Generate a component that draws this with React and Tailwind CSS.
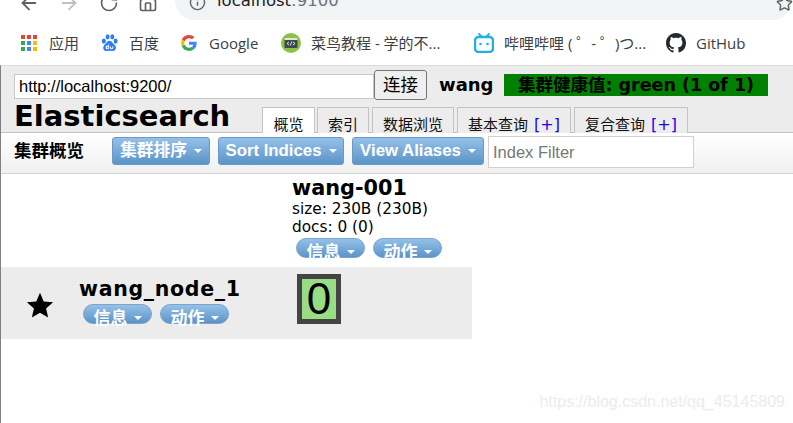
import React from 'react';
import { ArrowLeft, ArrowRight, RotateCw, Home, Info, Star } from 'lucide-react';

const sans = "font-['Liberation_Sans','Noto_Sans_CJK_SC',sans-serif]";
const verdana = "font-['DejaVu_Sans','Noto_Sans_CJK_SC',sans-serif]";

const Caret = ({ className = 'border-t-white' }) => (
    <span className={`inline-block w-0 h-0 border-x-[4px] border-x-transparent border-t-[4px] ${className}`} />
);

const BarButton = ({ label, width, ml }) => (
    <div
        className={`${width} ${ml} h-[28px] mt-[1px] flex items-center justify-center gap-[7px] rounded-[3px] border border-[#6d97c4] bg-gradient-to-b from-[#95c1e8] to-[#5a94c8] text-white font-bold text-[16.800px] shrink-0`}
    >
        <span>{label}</span>
        <Caret />
    </div>
);

const PillButton = ({ label, ml }) => (
    <div className={`${ml} w-[69px] h-[20px] flex justify-center gap-[6px] rounded-full border border-[#7ba3cd] bg-gradient-to-b from-[#95c1e8] to-[#5a94c8] text-white font-bold text-[17px] shrink-0`}>
        <span className="mt-[4px] leading-[20px] h-[20px] whitespace-nowrap">{label}</span>
        <Caret className="border-t-white mt-[11px]" />
    </div>
);

const Tab = ({ active, width, ml, children }) => (
    <div
        className={`${width} ${ml} h-[26px] flex justify-center items-start pt-[7px] border border-b-0 border-[#c4c4c4] text-[15px] leading-[20px] text-[#111] whitespace-nowrap ${active ? 'bg-white' : 'bg-[#ececec]'}`}
    >
        {children}
    </div>
);

const Plus = () => (
    <span className={`ml-[6px] text-[16px] text-[#2200ee] font-['DejaVu_Sans',sans-serif]`}>[+]</span>
);

const Bookmark = ({ icon, label, width }) => (
    <div className={`${width} flex items-center shrink-0`}>
        {icon}
        <span className="text-[15px] text-[#3c4043] whitespace-nowrap">{label}</span>
    </div>
);

const AppsIcon = () => (
    <div className="grid grid-cols-3 gap-[2px] w-[16px] mr-[12px]">
        {['bg-[#ea4335]', 'bg-[#ea4335]', 'bg-[#ea4335]', 'bg-[#34a853]', 'bg-[#4285f4]', 'bg-[#fbbc04]', 'bg-[#34a853]', 'bg-[#4285f4]', 'bg-[#fbbc04]'].map((c, i) => (
            <span key={i} className={`w-[4px] h-[4px] ${c}`} />
        ))}
    </div>
);

const BaiduIcon = () => (
    <svg viewBox="0 0 18 19" className="w-[17px] h-[18px] mr-[11px]">
        <g fill="#2e7cf6">
            <ellipse cx="3" cy="7.500" rx="2.200" ry="2.800" />
            <ellipse cx="7" cy="3" rx="2.100" ry="2.800" />
            <ellipse cx="12" cy="3" rx="2.100" ry="2.800" />
            <ellipse cx="15.500" cy="7.500" rx="2.100" ry="2.800" />
            <path d="M9 7c-2 0-3 2-4.500 3.500C3 12 2 13.500 2.500 15.500 3 17.500 5 18 7 18c1 0 2.500-.5 4 0 2 .3 4-.5 4.700-2.500.5-2-.7-3.700-2.200-5C12 9 11 7 9 7z" />
        </g>
        <path d="M6 12.500v3M8 11v4.500H5.500v-2.500H8M10 13v2.500h2.500V13" fill="none" stroke="#fff" strokeWidth="1" />
    </svg>
);

const GoogleIcon = () => (
    <svg viewBox="0 0 48 48" className="w-[16px] h-[16px] mr-[12px]">
        <path fill="#EA4335" d="M24 9.500c3.500 0 6.700 1.200 9.200 3.600l6.900-6.900C35.900 2.400 30.500 0 24 0 14.600 0 6.500 5.400 2.600 13.200l8 6.200C12.400 13.700 17.700 9.500 24 9.500z" />
        <path fill="#4285F4" d="M47 24.500c0-1.600-.1-3.100-.4-4.500H24v9h12.900c-.6 3-2.200 5.500-4.700 7.200l7.700 6C44.400 38 47 31.800 47 24.500z" />
        <path fill="#FBBC05" d="M10.500 28.600c-.5-1.400-.8-3-.8-4.600s.3-3.200.8-4.600l-8-6.200C.9 16.500 0 20.100 0 24s.9 7.500 2.600 10.800l7.900-6.200z" />
        <path fill="#34A853" d="M24 48c6.500 0 11.900-2.100 15.900-5.800l-7.700-6c-2.200 1.500-4.900 2.300-8.200 2.300-6.300 0-11.600-4.200-13.500-9.900l-8 6.200C6.500 42.600 14.600 48 24 48z" />
    </svg>
);

const RunoobIcon = () => (
    <svg viewBox="0 0 20 20" className="w-[20px] h-[20px] mr-[10px]">
        <circle cx="10" cy="10" r="10" fill="#8dc143" />
        <rect x="3.500" y="5" width="13" height="10" rx="1" fill="#3f4a4f" />
        <rect x="3.500" y="5" width="13" height="2" fill="#dfe5df" />
        <path d="M8 9l-2 1.500L8 12M12 9l2 1.500L12 12M10.800 8.500l-1.500 4" fill="none" stroke="#fff" strokeWidth=".8" />
    </svg>
);

const BiliIcon = () => (
    <svg viewBox="0 0 20 20" className="w-[20px] h-[20px] mr-[10px]">
        <path d="M5 1l3 3M15 1l-3 3" stroke="#20b0e3" strokeWidth="1.800" strokeLinecap="round" />
        <rect x="1" y="4" width="18" height="15" rx="3.500" fill="none" stroke="#20b0e3" strokeWidth="2.400" />
        <circle cx="6.500" cy="11" r="1.300" fill="#20b0e3" />
        <circle cx="13.500" cy="11" r="1.300" fill="#20b0e3" />
    </svg>
);

const GithubIcon = () => (
    <svg viewBox="0 0 16 16" className="w-[20px] h-[20px] mr-[10px]" fill="#24292e">
        <path d="M8 0C3.580 0 0 3.580 0 8c0 3.540 2.290 6.530 5.470 7.590.4.070.55-.17.55-.38 0-.19-.01-.82-.01-1.490-2.010.37-2.530-.49-2.690-.94-.09-.23-.48-.94-.82-1.130-.28-.15-.68-.52-.01-.53.630-.01 1.080.58 1.230.82.720 1.210 1.870.87 2.330.66.070-.52.280-.87.510-1.070-1.780-.2-3.640-.89-3.640-3.950 0-.87.310-1.590.820-2.150-.08-.2-.36-1.020.08-2.120 0 0 .67-.21 2.200.82.640-.18 1.320-.27 2-.27s1.360.09 2 .27c1.530-1.040 2.200-.82 2.200-.82.440 1.100.160 1.920.080 2.120.510.560.820 1.270.820 2.150 0 3.070-1.870 3.750-3.650 3.950.290.250.540.730.540 1.480 0 1.070-.01 1.930-.01 2.200 0 .21.150.46.550.38A8.010 8.010 0 0016 8c0-4.420-3.580-8-8-8z" />
    </svg>
);

export default function App() {
    return (
        <div className={`w-[793px] h-[423px] overflow-hidden bg-white ${sans}`}>
            {/* browser chrome */}
            <div className="h-[20px] flex items-center overflow-hidden">
                <ArrowLeft size={22} strokeWidth={2} className="ml-[18px] text-[#5f6368] -mt-[14px] shrink-0" />
                <ArrowRight size={22} strokeWidth={2} className="ml-[18px] text-[#bdc1c6] -mt-[14px] shrink-0" />
                <RotateCw size={20} strokeWidth={2} className="ml-[19px] text-[#5f6368] -mt-[14px] shrink-0" />
                <Home size={20} strokeWidth={2} className="ml-[19px] text-[#5f6368] -mt-[14px] shrink-0" />
                <div className="ml-[17px] w-[617px] h-[20px] rounded-b-[20px] bg-[#f1f3f4] flex items-start shrink-0">
                    <Info size={17} strokeWidth={2} className="ml-[14px] -mt-[6px] text-[#5f6368] shrink-0" />
                    <span className={`ml-[11px] -mt-[9px] text-[16.500px] leading-[20px] text-[#202124] ${verdana}`}>localhost<span className="text-[#70757a]">:9100</span></span>
                </div>
                <Star size={17} strokeWidth={2} className="-ml-[16px] text-[#5f6368] -mt-[14px] shrink-0" />
            </div>
            <div className="h-[45px] flex items-center pl-[21px] pt-[1px] font-['Open_Sans','Noto_Sans_CJK_SC',sans-serif]">
                <Bookmark width="w-[80px]" icon={<AppsIcon />} label="应用" />
                <Bookmark width="w-[80px]" icon={<BaiduIcon />} label="百度" />
                <Bookmark width="w-[100px]" icon={<GoogleIcon />} label="Google" />
                <Bookmark width="w-[193px]" icon={<RunoobIcon />} label="菜鸟教程 - 学的不..." />
                <Bookmark width="w-[192px]" icon={<BiliIcon />} label="哔哩哔哩 ( ゜- ゜)つ..." />
                <Bookmark width="w-[100px]" icon={<GithubIcon />} label="GitHub" />
            </div>

            {/* elasticsearch-head page */}
            <div className="h-[358px] border-l-[1px] border-[#808080] border-t border-t-[#dadada]">
                <div className="h-[67px] bg-[#ececec] border-b border-[#c0c0c0]">
                    <div className="flex items-start pl-[13px] pt-[4px] h-[34px]">
                        <input
                            readOnly
                            value="http://localhost:9200/"
                            className={`w-[360px] h-[25px] mt-[4px] px-[4px] bg-white border border-[#c8c8c8] text-[16.500px] text-black ${sans}`}
                        />
                        <div className="w-[53px] h-[30px] flex items-center justify-center rounded-[3px] border border-[#767676] bg-[#efefef] text-[17.500px] text-black">连接</div>
                        <span className={`ml-[12px] mt-[4px] w-[53px] text-[18px] leading-[22px] font-bold text-black ${verdana}`}>wang</span>
                        <div className={`ml-[12px] mt-[4px] w-[264px] h-[22px] bg-[#008000] text-center text-[17.500px] leading-[22px] font-bold text-black whitespace-nowrap ${verdana}`}>集群健康值: green (1 of 1)</div>
                    </div>
                    <div className="flex h-[32px] pl-[13px]">
                        <div className={`w-[248px] text-[29px] leading-[32px] font-bold text-black ${verdana}`}>Elasticsearch</div>
                        <div className="flex items-end h-[33px]">
                            <Tab active width="w-[53px]">概览</Tab>
                            <Tab width="w-[52px]" ml="ml-[2px]">索引</Tab>
                            <Tab width="w-[82px]" ml="ml-[3px]">数据浏览</Tab>
                            <Tab width="w-[114px]" ml="ml-[3px]">基本查询<Plus /></Tab>
                            <Tab width="w-[114px]" ml="ml-[3px]">复合查询<Plus /></Tab>
                        </div>
                    </div>
                </div>

                <div className="h-[41px] flex items-start pt-[3px] pl-[13px] bg-gradient-to-b from-white to-[#f0f0f0] border-b border-[#d4d4d4]">
                    <span className="w-[98px] pt-[3px] text-[17.500px] leading-[24px] font-bold text-black shrink-0">集群概览</span>
                    <BarButton label="集群排序" width="w-[98px]" />
                    <BarButton label="Sort Indices" width="w-[126px]" ml="ml-[8px]" />
                    <BarButton label="View Aliases" width="w-[132px]" ml="ml-[8px]" />
                    <input
                        readOnly
                        placeholder="Index Filter"
                        className={`ml-[4px] w-[206px] h-[32px] px-[4px] bg-white border border-[#d0d0d0] text-[16.500px] placeholder:text-[#777] ${sans}`}
                    />
                </div>

                <div className={`flex pl-[291px] h-[93px] ${verdana}`}>
                    <div className="pt-[3px]">
                        <div className="text-[20.800px] leading-[23px] font-bold text-black">wang-001</div>
                        <div className="text-[15.300px] leading-[18px] text-black">size: 230B (230B)</div>
                        <div className="text-[15.300px] leading-[18px] text-black">docs: 0 (0)</div>
                        <div className={`flex pl-[4px] mt-[2px] ${sans}`}>
                            <PillButton label="信息" />
                            <PillButton label="动作" ml="ml-[8px]" />
                        </div>
                    </div>
                </div>

                <div className={`w-[471px] h-[72px] flex bg-[#ececec] ${verdana}`}>
                    <div className="w-[78px] flex items-center justify-center">
                        <svg viewBox="0 0 24 24" className="w-[28px] h-[28px] mt-[3px]" fill="#000">
                            <path d="M12 1.500l3.200 7.400 8 .7-6 5.300 1.800 7.900L12 18.600l-7 4.200 1.800-7.900-6-5.300 8-.7z" />
                        </svg>
                    </div>
                    <div className="w-[218px] pt-[10px] shrink-0">
                        <div className="text-[20.500px] leading-[24px] tracking-[0.7px] font-bold text-black whitespace-nowrap">wang_node_1</div>
                        <div className={`flex pl-[4px] mt-[3px] ${sans}`}>
                            <PillButton label="信息" />
                            <PillButton label="动作" ml="ml-[8px]" />
                        </div>
                    </div>
                    <div className="pt-[7px]">
                        <div className={`w-[44px] h-[50px] border-[5px] border-[#444] bg-[#98dc84] flex items-center justify-center text-[44px] leading-none text-black ${sans}`}>0</div>
                    </div>
                </div>

                <div className="flex justify-end pt-[53px] pr-[8px]">
                    <span className="text-[16px] leading-[20px] text-[#ececec]">https://blog.csdn.net/qq_45145809</span>
                </div>
            </div>
        </div>
    );
}
